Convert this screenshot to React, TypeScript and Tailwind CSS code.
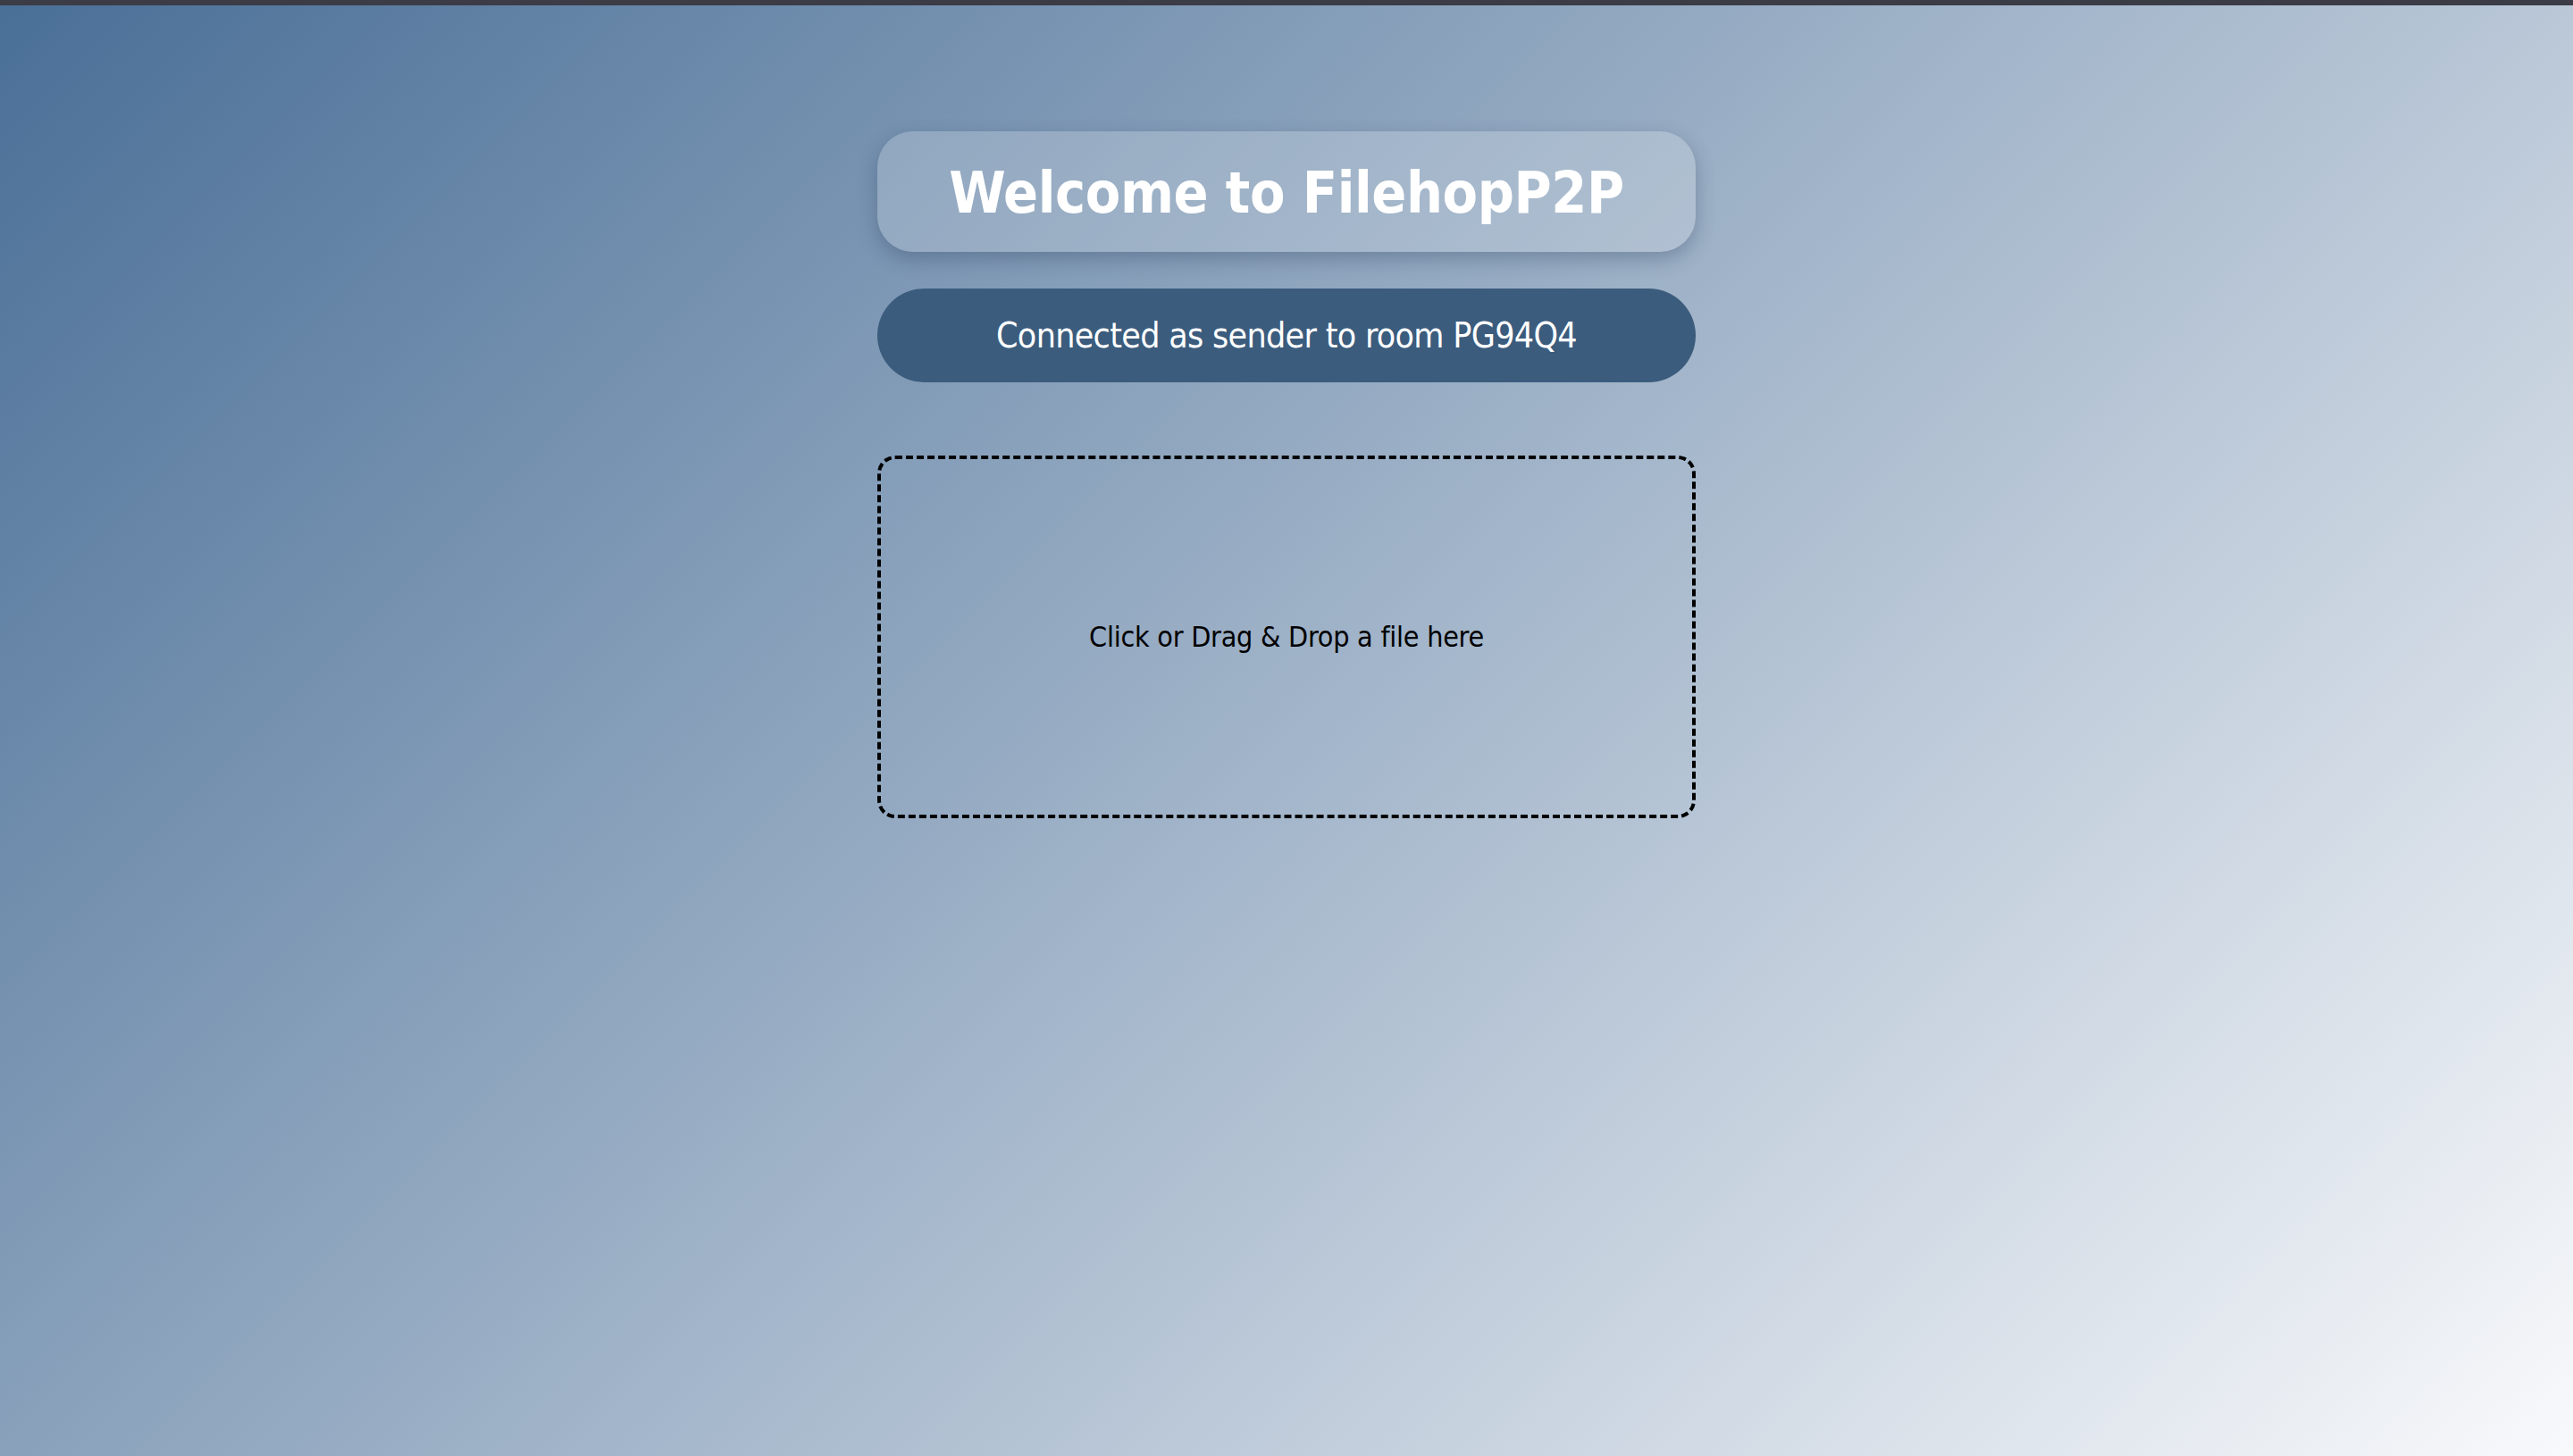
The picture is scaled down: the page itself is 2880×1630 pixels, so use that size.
export default function App() {
  return (
    <div
      className="min-h-screen w-full border-t-[6px] border-[#3b3c46] bg-[linear-gradient(135deg,#4a6f97_0%,#f8f9fb_100%)]"
      style={{ fontFamily: '"DejaVu Sans Condensed", "DejaVu Sans", sans-serif' }}
    >
      <main className="mx-auto flex w-[916px] flex-col items-stretch pt-[141px]">
        <div className="flex h-[135px] items-center justify-center rounded-[40px] bg-white/20 shadow-[0_8px_22px_rgba(30,50,80,0.3)]">
          <h1 className="pt-[2px] text-[64px] font-bold tracking-[-0.4px] text-white">Welcome to FilehopP2P</h1>
        </div>

        <div className="mt-[41px] flex h-[105px] items-center justify-center rounded-full bg-[#3b5c7d]">
          <p className="pt-[2px] text-[39px] tracking-[-0.7px] text-white">Connected as sender to room PG94Q4</p>
        </div>

        <label className="mt-[82px] flex h-[406px] cursor-pointer items-center justify-center rounded-[20px] border-[4px] border-dashed border-black">
          <input type="file" className="hidden" />
          <span className="text-[32px] tracking-[-0.25px] text-black">Click or Drag &amp; Drop a file here</span>
        </label>
      </main>
    </div>
  );
}
